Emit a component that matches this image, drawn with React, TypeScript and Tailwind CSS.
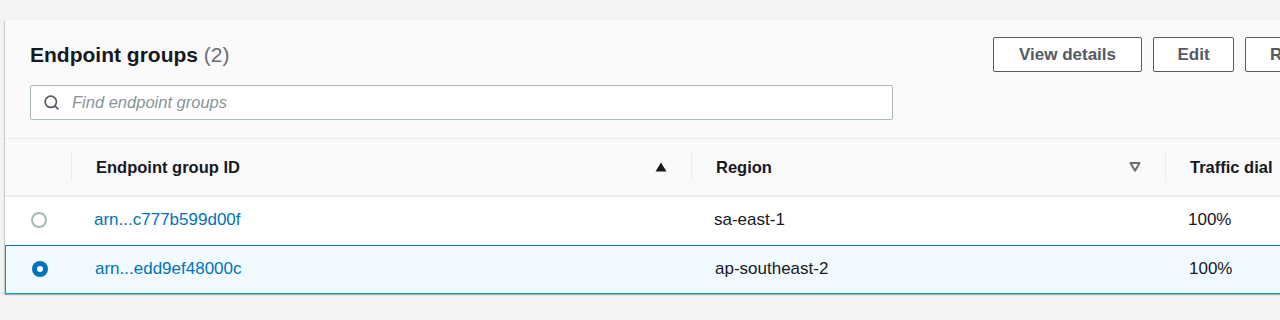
import React from 'react';
import { Search } from 'lucide-react';

const rows = [
  { id: 'arn...c777b599d00f', region: 'sa-east-1', dial: '100%', selected: false },
  { id: 'arn...edd9ef48000c', region: 'ap-southeast-2', dial: '100%', selected: true }
];

const cols = 'grid grid-cols-[66px_620px_474px_1fr]';

function Radio({ checked }: { checked: boolean }) {
  if (checked) {
    return (
      <span className="flex h-4 w-4 items-center justify-center rounded-full bg-[#0073bb]">
        <span className="h-[6px] w-[6px] rounded-full bg-white" />
      </span>
    );
  }
  return <span className="block h-4 w-4 rounded-full border-2 border-[#aab7b8] bg-white" />;
}

function HeaderCell({ label, sort }: { label: string; sort?: 'asc' | 'none' }) {
  return (
    <div className="flex h-full items-center">
      <div className="h-7 w-px bg-[#eaeded]" />
      <div className="flex flex-1 items-center justify-between pl-6 pr-6">
        <span className="text-[16.5px] font-bold text-[#16191f]">{label}</span>
        {sort === 'asc' && (
          <svg width="12" height="10" viewBox="0 0 12 10">
            <path d="M6 0.5 L11.5 9.5 L0.5 9.5 Z" fill="#16191f" />
          </svg>
        )}
        {sort === 'none' && (
          <svg width="12" height="10" viewBox="0 0 12 10">
            <path d="M1.5 1 L10.5 1 L6 8.8 Z" fill="none" stroke="#687078" strokeWidth="2" strokeLinejoin="round" />
          </svg>
        )}
      </div>
    </div>
  );
}

export default function App() {
  return (
    <div className="h-[320px] w-[1280px] overflow-hidden bg-[#f2f3f3] pl-[5px] pt-5 font-['Liberation_Sans',Arial,sans-serif] text-base text-[#16191f]">
      <div className="w-[1360px] bg-white shadow-[0_1px_1px_0_rgba(0,28,36,0.2),-1px_1px_1px_0_rgba(0,28,36,0.15)]">
        <div className="border-b border-[#eaeded] bg-[#fafafa] pb-[18px] pl-[25px] pt-[17px]">
          <div className="flex h-[35px] items-center">
            <h2 className="w-[963px] text-[21px] font-bold leading-7">
              Endpoint groups <span className="font-normal text-[#687078]">(2)</span>
            </h2>
            <div className="flex gap-[11px] text-[17px]">
              <button className="h-[35px] w-[149px] rounded-[2px] border border-[#545b64] bg-white font-bold text-[#545b64]">View details</button>
              <button className="h-[35px] w-[81px] rounded-[2px] border border-[#545b64] bg-white font-bold text-[#545b64]">Edit</button>
              <button className="h-[35px] w-[110px] rounded-[2px] border border-[#545b64] bg-white pl-[24px] text-left font-bold text-[#545b64]">Remove</button>
            </div>
          </div>
          <div className="mt-[13px] flex h-[35px] w-[863px] items-center gap-[12px] rounded-[2px] border border-[#aab7b8] bg-white pl-3">
            <Search size={17} strokeWidth={2.4} color="#545b64" />
            <span className="text-[16.5px] italic text-[#879596]">Find endpoint groups</span>
          </div>
        </div>

        <div className={`${cols} h-[58px] border-b-2 border-[#eaeded] bg-[#fafafa]`}>
          <div />
          <HeaderCell label="Endpoint group ID" sort="asc" />
          <HeaderCell label="Region" sort="none" />
          <HeaderCell label="Traffic dial" />
        </div>

        {rows.map((row) => (
          <div
            key={row.id}
            className={
              row.selected
                ? `${cols} h-[49px] items-center border-x border-b border-t border-x-[#00a1c9] border-b-[#00a1c9] border-t-[#0073bb] bg-[#f1faff] pb-[2px] text-[17px]`
                : `${cols} h-[48px] items-center bg-white pb-[2px] text-[17px]`
            }
          >
            <div className="flex justify-center pl-px">
              <Radio checked={row.selected} />
            </div>
            <div className="pl-[23px] text-[#0073bb]">{row.id}</div>
            <div className="pl-[23px]">{row.region}</div>
            <div className="pl-[23px]">{row.dial}</div>
          </div>
        ))}
      </div>
    </div>
  );
}
